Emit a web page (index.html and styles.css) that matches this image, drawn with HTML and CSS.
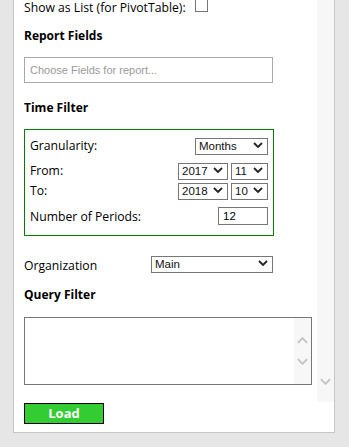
FILE: index.html
```html
<!DOCTYPE html>
<html lang="en">
<head>
    <meta charset="UTF-8">
    <title>Report Options</title>
    <link rel="stylesheet" href="styles.css">
</head>
<body>
    <div class="panel">
        <div class="scroll-area">
            <div class="fields">
                <div class="list-row">
                    <span>Show as List (for PivotTable):</span>
                    <span class="checkbox"></span>
                </div>

                <h3 class="section-title first">Report Fields</h3>
                <input class="field-picker" type="text" placeholder="Choose Fields for report...">

                <h3 class="section-title">Time Filter</h3>
                <div class="time-box">
                    <div class="time-row">
                        <span>Granularity:</span>
                        <div class="select-wrap months">
                            <select><option>Months</option></select>
                            <svg class="chev" viewBox="0 0 10 6"><path d="M1 1 L5 5 L9 1" /></svg>
                        </div>
                    </div>
                    <div class="time-row from-row">
                        <span>From:</span>
                        <div class="pair">
                            <div class="select-wrap year">
                                <select><option>2017</option></select>
                                <svg class="chev" viewBox="0 0 10 6"><path d="M1 1 L5 5 L9 1" /></svg>
                            </div>
                            <div class="select-wrap month">
                                <select><option>11</option></select>
                                <svg class="chev" viewBox="0 0 10 6"><path d="M1 1 L5 5 L9 1" /></svg>
                            </div>
                        </div>
                    </div>
                    <div class="time-row to-row">
                        <span>To:</span>
                        <div class="pair">
                            <div class="select-wrap year">
                                <select><option>2018</option></select>
                                <svg class="chev" viewBox="0 0 10 6"><path d="M1 1 L5 5 L9 1" /></svg>
                            </div>
                            <div class="select-wrap month">
                                <select><option>10</option></select>
                                <svg class="chev" viewBox="0 0 10 6"><path d="M1 1 L5 5 L9 1" /></svg>
                            </div>
                        </div>
                    </div>
                    <div class="time-row periods-row">
                        <span>Number of Periods:</span>
                        <input class="periods" type="text" value="12">
                    </div>
                </div>

                <div class="org-row">
                    <span class="org-label">Organization</span>
                    <div class="select-wrap org">
                        <select><option>Main</option></select>
                        <svg class="chev" viewBox="0 0 10 6"><path d="M1 1 L5 5 L9 1" /></svg>
                    </div>
                </div>

                <h3 class="section-title query-title">Query Filter</h3>
                <div class="query-box">
                    <textarea></textarea>
                    <div class="mini-scroll">
                        <svg class="soft-chev" viewBox="0 0 12 7"><path d="M1 6 L6 1 L11 6" /></svg>
                        <svg class="soft-chev" viewBox="0 0 12 7"><path d="M1 1 L6 6 L11 1" /></svg>
                    </div>
                </div>
            </div>
            <div class="scrollbar">
                <svg class="soft-chev" viewBox="0 0 12 7"><path d="M1 1 L6 6 L11 1" /></svg>
            </div>
        </div>
        <div class="footer">
            <button class="load-btn">Load</button>
        </div>
    </div>
</body>
</html>
```

FILE: styles.css
```css
body {
    margin: 0;
    background: #e6e6e6;
    font-family: 'Open Sans', sans-serif;
    font-size: 12.2px;
    color: #000;
}

.panel {
    margin-left: 13px;
    width: 320px;
    background: #fff;
    border: 1px solid #c6c6c6;
    border-top: none;
}

.scroll-area {
    display: flex;
    height: 402px;
}

.fields {
    flex: 1;
    padding-left: 10px;
}

.scrollbar {
    width: 17px;
    background: #f7f7f7;
    display: flex;
    flex-direction: column;
    justify-content: flex-end;
    align-items: center;
    padding-bottom: 17px;
    box-sizing: border-box;
}

.list-row {
    display: flex;
    align-items: center;
    gap: 9px;
    height: 15px;
    line-height: 15px;
}

.checkbox {
    display: inline-block;
    width: 11px;
    height: 11px;
    border: 1px solid #767676;
    margin-top: -4px;
}

.section-title {
    margin: 17px 0 0;
    font-size: 12px;
    font-weight: 700;
    line-height: 16px;
}

.section-title.first {
    margin-top: 13px;
}

.field-picker {
    display: block;
    margin-top: 13px;
    width: 249px;
    height: 26px;
    box-sizing: border-box;
    border: 1px solid #a9a9a9;
    padding: 0 5px;
    font-family: 'Liberation Sans', Arial, sans-serif;
    font-size: 11px;
}

.field-picker::placeholder {
    color: #9a9a9a;
}

.time-box {
    margin-top: 13px;
    width: 250px;
    height: 107px;
    box-sizing: border-box;
    border: 1px solid #008000;
    padding: 7px 5px 0 5px;
}

.time-row {
    display: flex;
    justify-content: space-between;
    align-items: center;
    height: 17px;
}

.from-row {
    margin-top: 8px;
}

.to-row {
    margin-top: 3px;
}

.periods-row {
    margin-top: 8px;
    height: 18px;
}

.pair {
    display: flex;
    gap: 3px;
}

.select-wrap {
    position: relative;
    height: 17px;
}

.select-wrap select {
    appearance: none;
    -webkit-appearance: none;
    width: 100%;
    height: 17px;
    box-sizing: border-box;
    border: 1px solid #767676;
    border-radius: 0;
    background: #fff;
    padding: 0 0 0 3px;
    margin: 0;
    font-family: 'Liberation Sans', Arial, sans-serif;
    font-size: 11.5px;
    line-height: 15px;
    color: #111;
}

.chev {
    position: absolute;
    right: 5px;
    top: 5px;
    width: 10px;
    height: 6px;
    pointer-events: none;
}

.chev path {
    fill: none;
    stroke: #222;
    stroke-width: 1.8;
}

.months { width: 73px; }
.year { width: 50px; }
.month { width: 37px; }
.org { width: 122px; }

.periods {
    width: 50px;
    height: 18px;
    box-sizing: border-box;
    border: 1px solid #767676;
    padding: 0 0 0 4px;
    margin: 0;
    font-family: 'Liberation Sans', Arial, sans-serif;
    font-size: 11.5px;
}

.org-row {
    display: flex;
    align-items: center;
    margin-top: 19px;
    height: 17px;
}

.org-label {
    width: 127px;
    margin-top: 3px;
}

.query-title {
    margin-top: 15px;
}

.query-box {
    display: flex;
    margin-top: 14px;
    width: 288px;
    height: 68px;
    box-sizing: border-box;
    border: 1px solid #767676;
}

.query-box textarea {
    flex: 1;
    border: none;
    resize: none;
    outline: none;
    margin: 0;
}

.mini-scroll {
    width: 17px;
    background: #f7f7f7;
    display: flex;
    flex-direction: column;
    align-items: center;
    justify-content: center;
    gap: 14px;
}

.soft-chev {
    width: 11px;
    height: 7px;
}

.soft-chev path {
    fill: none;
    stroke: #c2c2c2;
    stroke-width: 2;
}

.footer {
    padding: 1px 0 8px 10px;
}

.load-btn {
    display: block;
    width: 80px;
    height: 21px;
    background: #33cc33;
    border: 1px solid #000;
    border-radius: 0;
    color: #fff;
    font-family: 'Open Sans', sans-serif;
    font-weight: 700;
    font-size: 13px;
    line-height: 17px;
    padding: 0;
}
```
